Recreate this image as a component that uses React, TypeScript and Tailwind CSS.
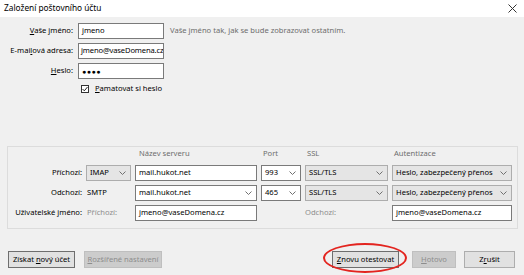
import React from 'react';

const Chevron = () => (
  <svg width="7" height="4" viewBox="0 0 7 4" className="shrink-0">
    <path d="M0.5 0.5L3.5 3.5L6.5 0.5" fill="none" stroke="#707070" strokeWidth="1" />
  </svg>
);

const TextBox = ({ value, className = '' }: { value: React.ReactNode; className?: string }) => (
  <div className={`h-[16px] min-w-0 border border-[#7a7a7a] bg-white px-[3px] flex items-center whitespace-nowrap overflow-hidden ${className}`}>
    {value}
  </div>
);

const Combo = ({ value, editable = false }: { value: string; editable?: boolean }) => (
  <div
    className={`h-[16px] min-w-0 overflow-hidden border flex items-center justify-between pl-[3px] pr-[4px] whitespace-nowrap ${
      editable ? 'bg-white border-[#7a7a7a]' : 'bg-[#e5e5e5] border-[#adadad]'
    }`}
  >
    <span>{value}</span>
    <Chevron />
  </div>
);

const Button = ({
  children,
  w,
  disabled = false,
  primary = false,
}: {
  children: React.ReactNode;
  w: string;
  disabled?: boolean;
  primary?: boolean;
}) => (
  <div
    className={`h-[17px] ${w} border flex items-center justify-center whitespace-nowrap ${
      disabled
        ? 'bg-[#cccccc] border-[#bfbfbf] text-[#8d8d8d]'
        : primary
        ? 'bg-[#e1e1e1] border-[#6e6e6e]'
        : 'bg-[#e1e1e1] border-[#adadad]'
    }`}
  >
    {children}
  </div>
);

export default function App() {
  return (
    <div className="w-[524px] h-[275px] bg-[#f0f0f0] relative overflow-hidden font-['Noto_Sans',sans-serif] text-[7.6px] leading-none text-black">
      {/* Title bar */}
      <div className="h-[17px] bg-white flex items-center justify-between pl-[4px] pr-[7px]">
        <span className="text-[8.3px]">Založení poštovního účtu</span>
        <svg width="9" height="9" viewBox="0 0 9 9">
          <path d="M0.5 0.5L8.5 8.5M8.5 0.5L0.5 8.5" stroke="#333" strokeWidth="1" />
        </svg>
      </div>

      {/* Identity */}
      <div className="pt-[6px] flex flex-col gap-[4px]">
        <div className="flex items-center gap-[5px]">
          <div className="w-[73px] text-right whitespace-nowrap">
            <span className="underline">V</span>aše jméno:
          </div>
          <TextBox value="jmeno" className="w-[86px]" />
          <span className="ml-[1px] text-[#6d6d6d] whitespace-nowrap">Vaše jméno tak, jak se bude zobrazovat ostatním.</span>
        </div>
        <div className="flex items-center gap-[5px]">
          <div className="w-[73px] text-right whitespace-nowrap">
            E-mai<span className="underline">l</span>ová adresa:
          </div>
          <TextBox
            value={<span className="tracking-[-0.15px]">jmeno@vaseDomena.cz</span>}
            className="w-[86px] !px-[2px]"
          />
        </div>
        <div className="flex items-center gap-[5px]">
          <div className="w-[73px] text-right whitespace-nowrap">
            <span className="underline">H</span>eslo:
          </div>
          <TextBox value={<span className="tracking-[0.5px] text-[7px]">●●●●</span>} className="w-[86px]" />
        </div>
        <div className="flex items-center gap-[6px] pl-[81px] h-[12px]">
          <div className="w-[8px] h-[8px] border border-[#333] bg-white flex items-center justify-center">
            <svg width="6" height="6" viewBox="0 0 6 6">
              <path d="M0.5 3L2.3 4.8L5.5 1" fill="none" stroke="#222" strokeWidth="1" />
            </svg>
          </div>
          <span>
            <span className="underline">P</span>amatovat si heslo
          </span>
        </div>
      </div>

      {/* Server settings */}
      <div className="mt-[51px] ml-[7px] mr-[6px] border border-[#dcdcdc] pb-[7px] pr-[4px]">
        <div className="grid grid-cols-[74px_45px_122px_40px_83px_120px] gap-x-[4px] gap-y-[4px] items-center">
          <div className="h-[14px]" />
          <div />
          <div className="pl-[4px] text-[#6d6d6d]">Název serveru</div>
          <div className="pl-[2px] text-[#6d6d6d]">Port</div>
          <div className="pl-[2px] text-[#6d6d6d]">SSL</div>
          <div className="pl-[2px] text-[#6d6d6d]">Autentizace</div>

          <div className="text-right">Příchozí:</div>
          <Combo value="IMAP" />
          <TextBox value="mail.hukot.net" />
          <Combo value="993" editable />
          <Combo value="SSL/TLS" />
          <Combo value="Heslo, zabezpečený přenos" />

          <div className="text-right">Odchozí:</div>
          <div className="pl-[1px]">SMTP</div>
          <Combo value="mail.hukot.net" editable />
          <Combo value="465" editable />
          <Combo value="SSL/TLS" />
          <Combo value="Heslo, zabezpečený přenos" />

          <div className="text-right whitespace-nowrap">Uživatelské jméno:</div>
          <div className="pl-[1px] text-[#8d8d8d]">Příchozí:</div>
          <TextBox value="jmeno@vaseDomena.cz" />
          <div />
          <div className="text-[#8d8d8d]">Odchozí:</div>
          <TextBox value="jmeno@vaseDomena.cz" />
        </div>
      </div>

      {/* Buttons */}
      <div className="mt-[22px] flex items-center pl-[8px] pr-[9px]">
        <div className="flex items-center gap-[9px]">
          <Button w="w-[67px]" primary>
            <span>
              Získat <span className="underline">n</span>ový účet
            </span>
          </Button>
          <Button w="w-[78px]" disabled>
            <span>
              <span className="underline">R</span>ozšířené nastavení
            </span>
          </Button>
        </div>
        <div className="ml-auto flex items-center">
          <Button w="w-[67px]" primary>
            <span>
              <span className="underline">Z</span>novu otestovat
            </span>
          </Button>
          <div className="ml-[13px]">
            <Button w="w-[44px]" disabled>
              <span>
                <span className="underline">H</span>otovo
              </span>
            </Button>
          </div>
          <div className="ml-[8px]">
            <Button w="w-[51px]">
              <span>
                Z<span className="underline">r</span>ušit
              </span>
            </Button>
          </div>
        </div>
      </div>

      {/* Red highlight */}
      <div className="absolute left-[323px] top-[243px] w-[84px] h-[30px] rounded-[50%] border-2 border-[#e3241f]" />
    </div>
  );
}
